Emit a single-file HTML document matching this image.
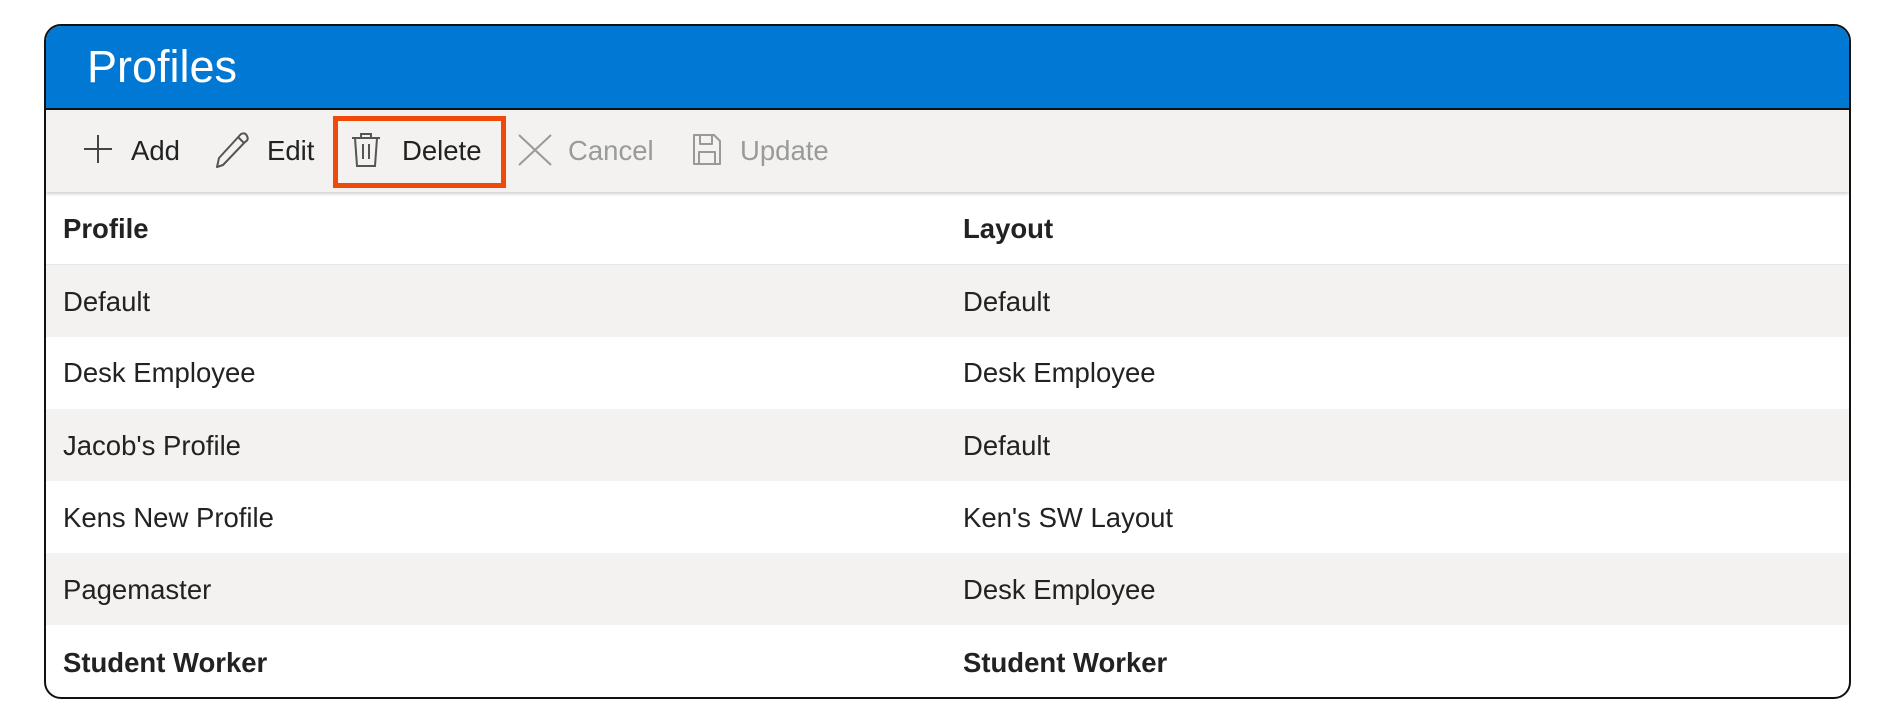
<!DOCTYPE html>
<html><head><style>
body{margin:0;width:1890px;height:724px;background:#fff;font-family:"Liberation Sans",sans-serif;position:relative;overflow:hidden}
.box{position:absolute;left:44px;top:24px;width:1803px;height:671px;border:2px solid #111;border-radius:17px;overflow:hidden;background:#fff}
.hd{position:absolute;left:0;top:0;right:0;height:82px;background:#0078d4;border-bottom:2px solid #111}
.hd span{position:absolute;left:41px;top:15px;color:#fff;font-size:45px}
.tb{position:absolute;left:0;top:84px;right:0;height:82px;background:#f3f2f1;box-shadow:0 2px 3px rgba(0,0,0,.18)}
.t{position:absolute;top:25px;font-size:27.5px;color:#222}
.g{color:#9a9a9a}
svg{position:absolute}
.row{position:absolute;left:0;right:0;height:72px;font-size:27.5px;color:#222}
.row span{position:absolute;top:21px}
.row .a{left:17px}.row .b{left:917px}
.alt{background:#f3f2f1}
.bold{font-weight:bold}
.del{position:absolute;left:287px;top:6px;width:173px;height:72px;border:5px solid #f04a0a;box-sizing:border-box}
</style></head><body>
<div class="box">
<div class="hd"><span>Profiles</span></div>
<div class="tb">
<svg style="left:36px;top:23px" width="32" height="32" viewBox="0 0 32 32"><path d="M16 2v28M2 16h28" stroke="#444" stroke-width="2" fill="none"/></svg>
<span class="t" style="left:85px">Add</span>
<svg style="left:168px;top:21px" width="38" height="38" viewBox="0 0 38 38"><path d="M3 36l2-9L27 3q4-2 6 2t-2 6L9 34z M24 6l6 6" stroke="#555" stroke-width="2" fill="none" stroke-linejoin="round"/></svg>
<span class="t" style="left:221px">Edit</span>
<div class="del"></div>
<svg style="left:303px;top:21px" width="34" height="38" viewBox="0 0 34 38"><path d="M3 7h28M12 7V3h10v4M6 7l2 28h18l2-28M14 13v15M20 13v15" stroke="#555" stroke-width="2" fill="none"/></svg>
<span class="t" style="left:356px">Delete</span>
<svg style="left:471px;top:23px" width="36" height="34" viewBox="0 0 36 34"><path d="M2 2l32 30M34 2L2 32" stroke="#999" stroke-width="2" fill="none"/></svg>
<span class="t g" style="left:522px">Cancel</span>
<svg style="left:645px;top:23px" width="32" height="34" viewBox="0 0 32 34"><path d="M3 2h20l6 6v23H3zM9 2v9h12V2M8 31V19h16v12" stroke="#999" stroke-width="2" fill="none" stroke-linejoin="round"/></svg>
<span class="t g" style="left:694px">Update</span>
</div>
<div class="row bold" style="top:166px"><span class="a">Profile</span><span class="b">Layout</span></div>
<div class="row alt" style="top:238px;border-top:1px solid #e6e6e6"><span class="a">Default</span><span class="b">Default</span></div>
<div class="row" style="top:310px"><span class="a">Desk Employee</span><span class="b">Desk Employee</span></div>
<div class="row alt" style="top:383px"><span class="a">Jacob's Profile</span><span class="b">Default</span></div>
<div class="row" style="top:455px"><span class="a">Kens New Profile</span><span class="b">Ken's SW Layout</span></div>
<div class="row alt" style="top:527px"><span class="a">Pagemaster</span><span class="b">Desk Employee</span></div>
<div class="row bold" style="top:600px"><span class="a">Student Worker</span><span class="b">Student Worker</span></div>
</div>
</body></html>
